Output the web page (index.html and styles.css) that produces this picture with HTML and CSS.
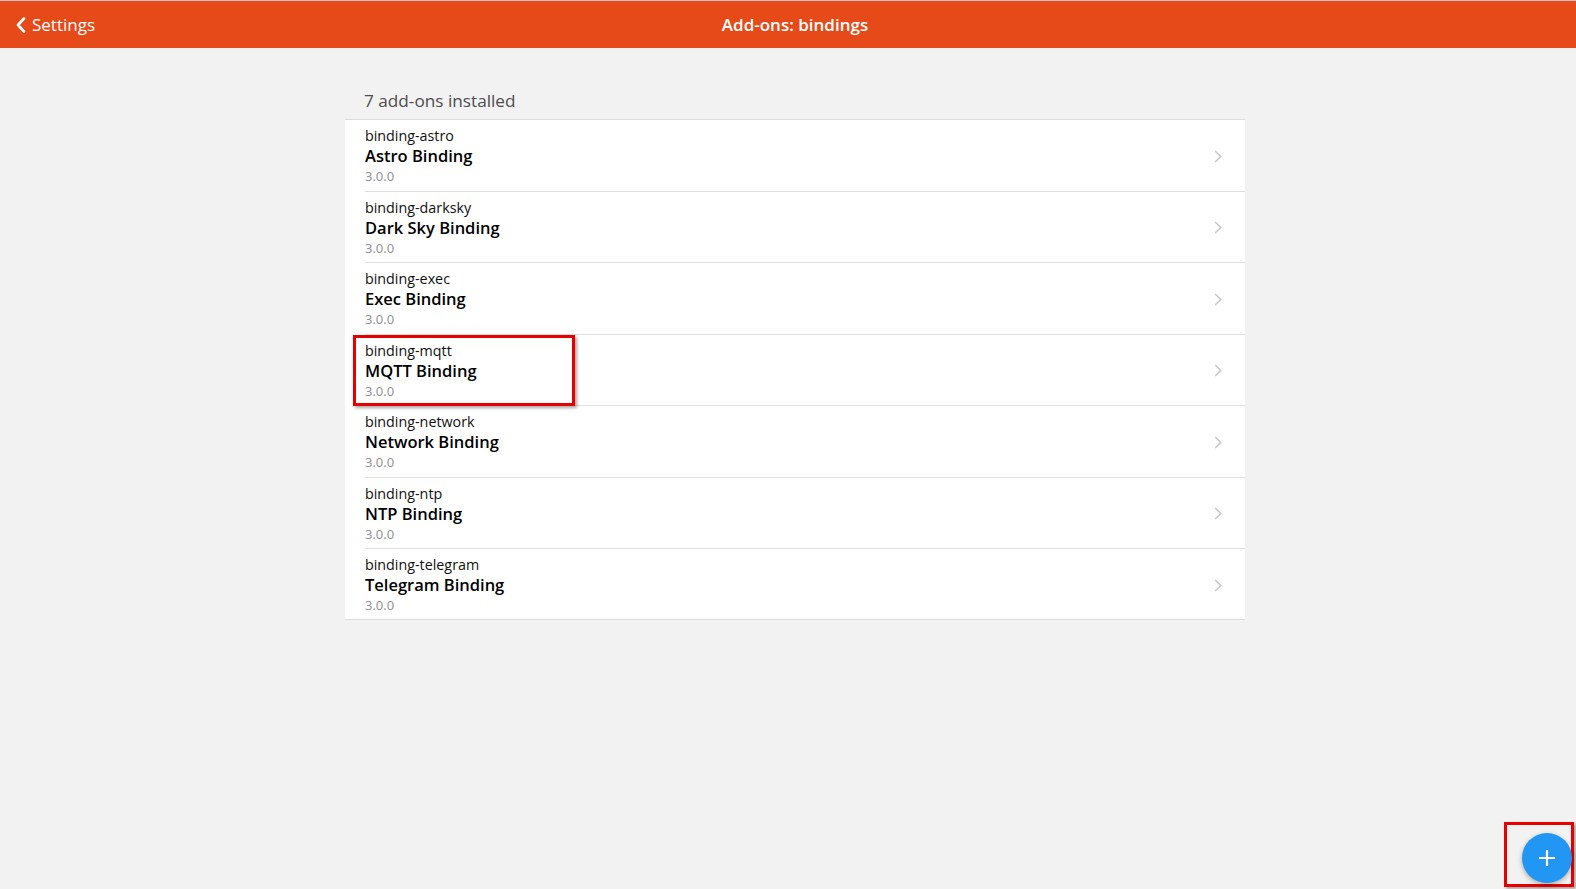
FILE: index.html
```html
<!DOCTYPE html>
<html lang="en">
<head>
<meta charset="utf-8">
<title>Add-ons: bindings</title>
<link rel="stylesheet" href="styles.css">
</head>
<body>
<header class="navbar">
  <a class="back" href="#">
    <svg class="back-icon" width="10" height="16" viewBox="0 0 10 16"><path d="M8 1.5L2 8l6 6.5" fill="none" stroke="#fff" stroke-width="2.6" stroke-linecap="round" stroke-linejoin="round"/></svg>
    <span>Settings</span>
  </a>
  <div class="title">Add-ons: bindings</div>
  <div></div>
</header>

<main class="page">
  <div class="block">
    <div class="block-title">7 add-ons installed</div>
    <ul class="list">
      <li class="item"><div class="inner"><div class="texts"><div class="header">binding-astro</div><div class="name">Astro Binding</div><div class="footer">3.0.0</div></div><svg class="chev" width="8" height="13" viewBox="0 0 8 13"><path d="M1.2 1l5.5 5.5L1.2 12" fill="none" stroke="#c7c7cc" stroke-width="1.6"/></svg></div></li>
      <li class="item"><div class="inner"><div class="texts"><div class="header">binding-darksky</div><div class="name">Dark Sky Binding</div><div class="footer">3.0.0</div></div><svg class="chev" width="8" height="13" viewBox="0 0 8 13"><path d="M1.2 1l5.5 5.5L1.2 12" fill="none" stroke="#c7c7cc" stroke-width="1.6"/></svg></div></li>
      <li class="item"><div class="inner"><div class="texts"><div class="header">binding-exec</div><div class="name">Exec Binding</div><div class="footer">3.0.0</div></div><svg class="chev" width="8" height="13" viewBox="0 0 8 13"><path d="M1.2 1l5.5 5.5L1.2 12" fill="none" stroke="#c7c7cc" stroke-width="1.6"/></svg></div></li>
      <li class="item highlighted"><div class="inner"><div class="texts"><div class="header">binding-mqtt</div><div class="name">MQTT Binding</div><div class="footer">3.0.0</div></div><svg class="chev" width="8" height="13" viewBox="0 0 8 13"><path d="M1.2 1l5.5 5.5L1.2 12" fill="none" stroke="#c7c7cc" stroke-width="1.6"/></svg></div><span class="mark mark-item"></span></li>
      <li class="item"><div class="inner"><div class="texts"><div class="header">binding-network</div><div class="name">Network Binding</div><div class="footer">3.0.0</div></div><svg class="chev" width="8" height="13" viewBox="0 0 8 13"><path d="M1.2 1l5.5 5.5L1.2 12" fill="none" stroke="#c7c7cc" stroke-width="1.6"/></svg></div></li>
      <li class="item"><div class="inner"><div class="texts"><div class="header">binding-ntp</div><div class="name">NTP Binding</div><div class="footer">3.0.0</div></div><svg class="chev" width="8" height="13" viewBox="0 0 8 13"><path d="M1.2 1l5.5 5.5L1.2 12" fill="none" stroke="#c7c7cc" stroke-width="1.6"/></svg></div></li>
      <li class="item"><div class="inner"><div class="texts"><div class="header">binding-telegram</div><div class="name">Telegram Binding</div><div class="footer">3.0.0</div></div><svg class="chev" width="8" height="13" viewBox="0 0 8 13"><path d="M1.2 1l5.5 5.5L1.2 12" fill="none" stroke="#c7c7cc" stroke-width="1.6"/></svg></div></li>
    </ul>
  </div>
</main>

<span class="mark mark-fab"></span>
<a class="fab" href="#">
  <svg width="18" height="18" viewBox="0 0 18 18"><path d="M9 1v16M1 9h16" stroke="#fff" stroke-width="2.2"/></svg>
</a>
</body>
</html>
```

FILE: styles.css
```css
html, body {
  margin: 0;
  padding: 0;
}
body {
  background: #f2f2f2;
  font-family: "Open Sans", "Noto Sans", Arial, sans-serif;
  color: #000;
  width: 1576px;
  height: 889px;
  overflow: hidden;
  position: relative;
}

.navbar {
  height: 47px;
  border-top: 1px solid #c4c4c4;
  background: #e64a19;
  display: grid;
  grid-template-columns: 1fr auto 1fr;
  align-items: center;
  padding-left: 14px;
  color: #fff;
}
.back {
  display: flex;
  align-items: center;
  color: #fff;
  text-decoration: none;
  font-size: 17px;
  margin-left: 2px;
  justify-self: start;
}
.back-icon {
  margin-right: 6px;
}
.title {
  font-size: 17px;
  font-weight: 600;
}

.page {
  padding-left: 14px;
}
.block {
  width: 900px;
  margin: 42px auto 0;
}
.block-title {
  font-size: 17.2px;
  line-height: 22px;
  color: #4d4d4d;
  padding-left: 19px;
  margin-bottom: 7px;
}
.list {
  list-style: none;
  margin: 0;
  padding: 0;
  background: #fff;
  border-top: 1px solid #dcdcdc;
  border-bottom: 1px solid #dcdcdc;
}
.item {
  padding-left: 20px;
  position: relative;
}
.inner {
  display: flex;
  align-items: center;
  justify-content: space-between;
  padding: 6px 23px 4.5px 0;
  border-bottom: 1px solid #e0e0e0;
}
.item:last-child .inner {
  border-bottom: none;
  padding-bottom: 4px;
}
.header {
  font-size: 14.3px;
  line-height: 20px;
  color: #111;
}
.name {
  font-size: 16.5px;
  font-weight: 600;
  line-height: 20px;
  color: #000;
}
.footer {
  font-size: 13px;
  line-height: 20px;
  color: #8e8e93;
}
.chev {
  display: block;
}

.mark {
  position: absolute;
  border: 3px solid #e60000;
  box-shadow: 2px 2px 3px rgba(0, 0, 0, 0.35);
  pointer-events: none;
}
.mark-item {
  left: 8px;
  top: 0;
  width: 216px;
  height: 65px;
}
.mark-fab {
  left: 1504px;
  top: 822px;
  width: 64px;
  height: 59px;
}

.fab {
  position: absolute;
  left: 1522px;
  top: 833px;
  width: 50px;
  height: 50px;
  border-radius: 50%;
  background: #2196f3;
  box-shadow: 0 2px 5px rgba(0, 0, 0, 0.3);
  display: flex;
  align-items: center;
  justify-content: center;
}
.fab svg {
  display: block;
}
```
